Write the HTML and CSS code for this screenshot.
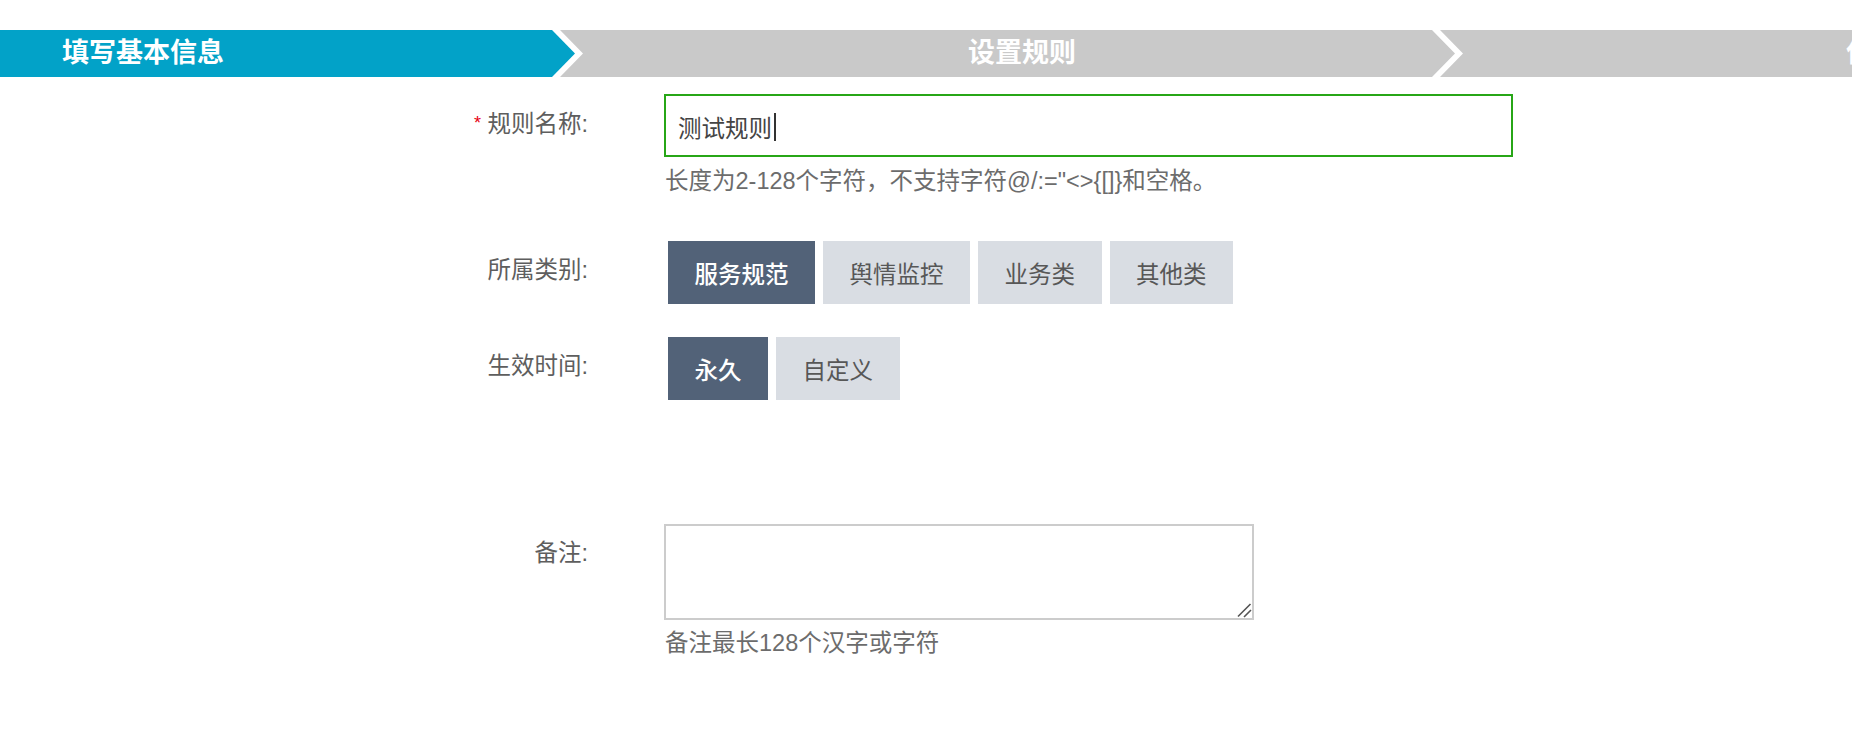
FILE: index.html
```html
<!DOCTYPE html>
<html lang="zh-CN">
<head>
<meta charset="utf-8">
<title>规则</title>
<link rel="stylesheet" href="styles.css">
</head>
<body>
<div class="steps">
  <div class="step step-first active">填写基本信息</div>
  <div class="step step-mid">设置规则</div>
  <div class="step step-last">保存规则</div>
</div>

<div class="form">
  <div class="row row-name">
    <div class="label"><span class="req">*</span> 规则名称:</div>
    <div class="control">
      <div class="input focused">测试规则<span class="caret"></span></div>
      <div class="help">长度为2-128个字符，不支持字符@/:="&lt;&gt;{[]}和空格。</div>
    </div>
  </div>

  <div class="row row-type">
    <div class="label">所属类别:</div>
    <div class="control btns">
      <span class="btn on">服务规范</span>
      <span class="btn">舆情监控</span>
      <span class="btn">业务类</span>
      <span class="btn">其他类</span>
    </div>
  </div>

  <div class="row row-time">
    <div class="label">生效时间:</div>
    <div class="control btns">
      <span class="btn on">永久</span>
      <span class="btn">自定义</span>
    </div>
  </div>

  <div class="row row-note">
    <div class="label">备注:</div>
    <div class="control">
      <textarea class="textarea"></textarea>
      <div class="help help-note">备注最长128个汉字或字符</div>
    </div>
  </div>
</div>
</body>
</html>
```

FILE: styles.css
```css
html, body {
  margin: 0;
  padding: 0;
  background: #fff;
}

body {
  font-family: "Liberation Sans", "Noto Sans CJK SC", sans-serif;
  color: #606060;
  overflow: hidden;
}

/* ---------- wizard steps ---------- */
.steps {
  display: flex;
  margin-top: 30px;
  height: 47px;
  background: #fff;
  overflow: hidden;
  width: 100%;
}

.step {
  height: 47px;
  line-height: 47px;
  font-size: 27px;
  font-weight: 700;
  color: #fff;
  white-space: nowrap;
  flex: none;
  background: #c9c9c9;
}

.step-first {
  width: 575px;
  padding-left: 62px;
  box-sizing: border-box;
  background: #02a2c8;
  clip-path: polygon(0 0, 552px 0, 575px 50%, 552px 100%, 0 100%);
}

.step-mid {
  width: 895px;
  margin-left: -15px;
  padding-left: 408px;
  box-sizing: border-box;
  clip-path: polygon(0 0, 872px 0, 895px 50%, 872px 100%, 0 100%, 23px 50%);
}

.step-last {
  width: 900px;
  margin-left: -15px;
  padding-left: 406px;
  box-sizing: border-box;
  clip-path: polygon(0 0, 100% 0, 100% 100%, 0 100%, 23px 50%);
}

/* ---------- form ---------- */
.form {
  padding-left: 388px;
}

.row {
  display: flex;
  align-items: flex-start;
  gap: 76px;
}

.row-name { margin-top: 17px; }
.row-type { margin-top: 44px; }
.row-time { margin-top: 33px; }
.row-note { margin-top: 124px; }

.label {
  width: 200px;
  flex: none;
  text-align: right;
  font-size: 23.5px;
  line-height: 32px;
  padding-top: 13px;
  color: #5e5e5e;
  white-space: nowrap;
}

.req {
  color: #e60012;
  font-size: 18px;
  vertical-align: 3px;
}

.control {
  display: flex;
  flex-direction: column;
}

.input {
  box-sizing: border-box;
  width: 849px;
  height: 63px;
  border: 2px solid #27a617;
  padding-left: 12px;
  display: flex;
  align-items: center;
  font-size: 23.5px;
  color: #444;
  padding-top: 3px;
}

.caret {
  display: inline-block;
  width: 1.5px;
  height: 28px;
  margin-left: 2px;
  background: #333;
}

.help {
  margin-top: 8px;
  font-size: 23.5px;
  line-height: 32px;
  color: #6c6c6c;
  padding-left: 1px;
  white-space: nowrap;
}

.help-note {
  margin-top: 7px;
}

.btns {
  flex-direction: row;
  gap: 8px;
  margin-left: 4px;
}

.btn {
  height: 63px;
  padding: 0 26.5px;
  display: flex;
  align-items: center;
  font-size: 23.5px;
  background: #d9dde3;
  color: #575757;
  white-space: nowrap;
}

.btn.on {
  background: #526278;
  color: #fff;
  font-weight: 500;
}

.textarea {
  box-sizing: border-box;
  width: 590px;
  height: 96px;
  border: 2px solid #cccccc;
  border-radius: 0;
  margin: 0;
  padding: 6px 8px;
  outline: none;
  font-family: inherit;
  font-size: 23.5px;
  background: #fff;
}

.textarea::-webkit-resizer {
  background-color: transparent;
  background-image: url("data:image/svg+xml,%3Csvg xmlns='http://www.w3.org/2000/svg' width='16' height='16'%3E%3Cpath d='M2 14.5 L14.5 2 M8 15 L15 8' stroke='%23555' stroke-width='1.6' fill='none'/%3E%3C/svg%3E");
  background-repeat: no-repeat;
  background-position: right bottom;
}
```
